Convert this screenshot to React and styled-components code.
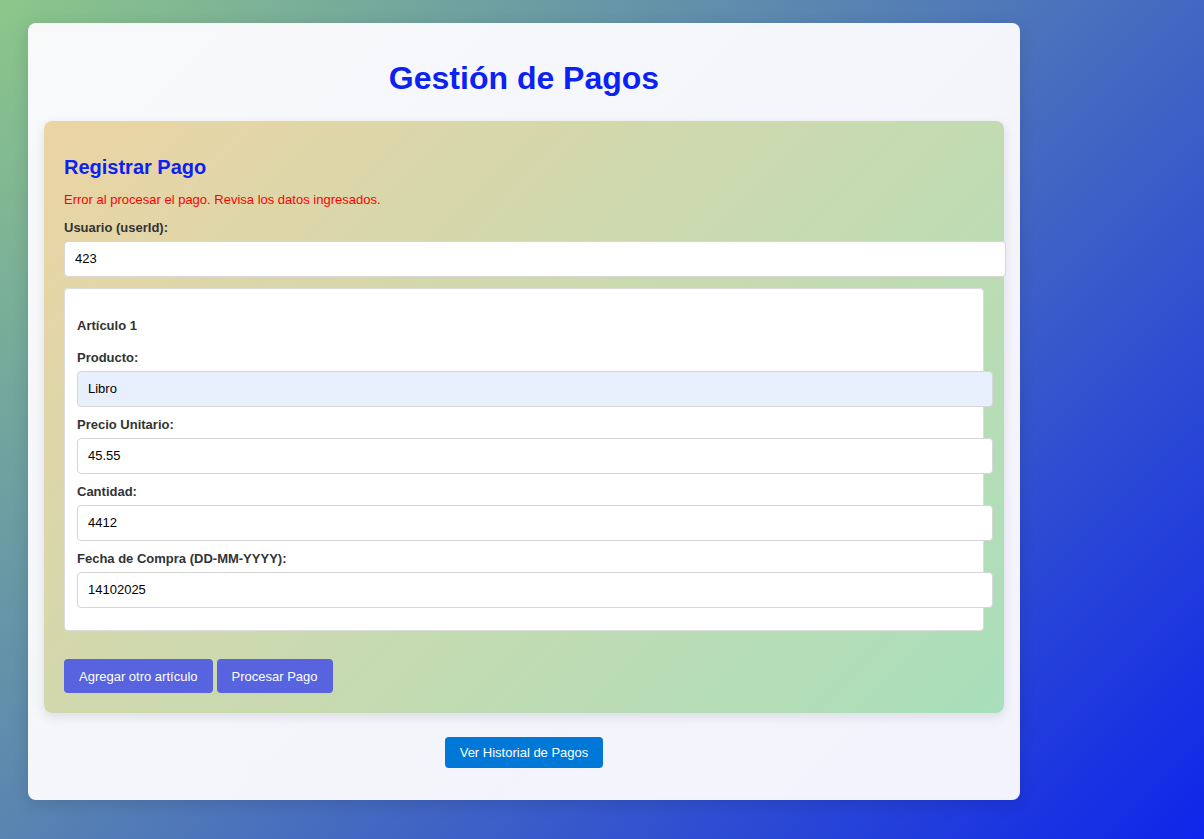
import React from 'react';
import styled, { createGlobalStyle } from 'styled-components';

const GlobalStyle = createGlobalStyle`
  html, body {
    margin: 0;
    padding: 0;
  }
  body {
    font-family: "Liberation Sans", Arial, sans-serif;
    min-height: 100vh;
    background: linear-gradient(135deg, #8cc789 0%, #0f25ea 100%);
    background-attachment: fixed;
  }
`;

const Page = styled.div`
  padding: 23px 28px 39px;
  box-sizing: border-box;
  min-height: 100vh;
`;

const Card = styled.div`
  width: 992px;
  box-sizing: border-box;
  padding: 16px 16px 32px;
  border-radius: 8px;
  background: linear-gradient(135deg, #f8f9f9 0%, #f2f3fd 100%);
  box-shadow: 0 4px 16px rgba(0, 0, 0, 0.12);
`;

const Title = styled.h1`
  margin: 21px 0 24px;
  text-align: center;
  font-size: 32px;
  font-weight: bold;
  color: #0b22f2;
`;

const FormPanel = styled.form`
  padding: 20px;
  border-radius: 8px;
  background: linear-gradient(135deg, #ecd4a4 0%, #a8dfbb 100%);
  box-shadow: 0 4px 12px rgba(0, 0, 0, 0.1);
`;

const FormTitle = styled.h2`
  margin: 15px 0 13px;
  font-size: 20px;
  font-weight: bold;
  color: #0b22f2;
`;

const ErrorText = styled.p`
  margin: 0 0 13px;
  font-size: 13px;
  color: #ff0000;
`;

const Label = styled.label`
  display: block;
  margin-bottom: 6px;
  font-size: 13px;
  font-weight: bold;
  color: #333;
`;

const Input = styled.input`
  display: block;
  width: 100%;
  padding: 10px;
  margin: 0 0 10px;
  font-family: "Liberation Sans", Arial, sans-serif;
  font-size: 13px;
  line-height: 14px;
  color: #000;
  background: ${props => (props.filled ? '#e8f0fe' : '#fff')};
  border: 1px solid #d6d6d6;
  border-radius: 4px;
  outline: none;
`;

const ArticleBox = styled.div`
  margin-top: 11px;
  padding: 12px;
  background: #fff;
  border: 1px solid #dcdcdc;
  border-radius: 4px;
`;

const ArticleTitle = styled.h4`
  margin: 17px 0 17px;
  font-size: 13px;
  font-weight: bold;
  color: #333;
`;

const Actions = styled.div`
  display: flex;
  gap: 4px;
  margin-top: 28px;
`;

const Button = styled.button`
  height: ${props => (props.small ? '31px' : '34px')};
  padding: 0 15px;
  border: none;
  border-radius: 4px;
  font-family: "Liberation Sans", Arial, sans-serif;
  font-size: 13px;
  color: #fff;
  background: ${props => props.bg || '#5763df'};
  cursor: pointer;
`;

const Footer = styled.div`
  display: flex;
  justify-content: center;
  margin-top: 24px;
`;

const fields = [
  { label: 'Producto:', value: 'Libro', filled: true },
  { label: 'Precio Unitario:', value: '45.55' },
  { label: 'Cantidad:', value: '4412' },
  { label: 'Fecha de Compra (DD-MM-YYYY):', value: '14102025' }
];

const App = () => (
  <>
    <GlobalStyle />
    <Page>
      <Card>
        <Title>Gestión de Pagos</Title>
        <FormPanel onSubmit={e => e.preventDefault()}>
          <FormTitle>Registrar Pago</FormTitle>
          <ErrorText>Error al procesar el pago. Revisa los datos ingresados.</ErrorText>
          <Label>Usuario (userId):</Label>
          <Input defaultValue="423" />
          <ArticleBox>
            <ArticleTitle>Artículo 1</ArticleTitle>
            {fields.map(f => (
              <React.Fragment key={f.label}>
                <Label>{f.label}</Label>
                <Input defaultValue={f.value} filled={f.filled ? 1 : 0} />
              </React.Fragment>
            ))}
          </ArticleBox>
          <Actions>
            <Button type="button">Agregar otro artículo</Button>
            <Button type="submit">Procesar Pago</Button>
          </Actions>
        </FormPanel>
        <Footer>
          <Button type="button" small bg="#0078d7">Ver Historial de Pagos</Button>
        </Footer>
      </Card>
    </Page>
  </>
);

export default App;
